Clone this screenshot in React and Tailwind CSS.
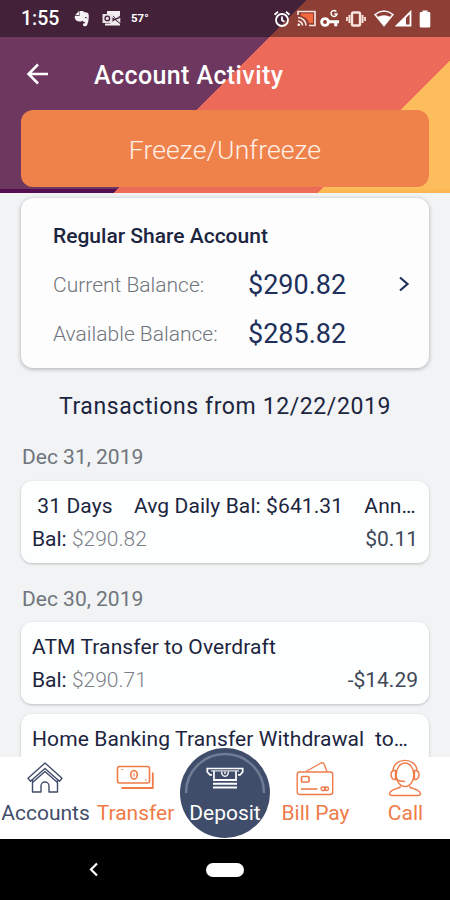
import React from 'react';

const AlarmIcon = () => (
  <svg width="18" height="18" viewBox="0 0 18 18" fill="none" stroke="#fff" strokeWidth="1.8">
    <circle cx="9" cy="10" r="6" />
    <path d="M9 6.5V10.2L11.5 11.8M1.5 4.8L5 1.8M16.5 4.8L13 1.8" />
  </svg>
);

const CastIcon = () => (
  <svg width="19" height="17" viewBox="0 0 19 17" fill="none" stroke="#fbe3de" strokeWidth="1.7">
    <path d="M4 3.5H16V13H12C11 9 8 6.5 4 6Z" fill="#f26a3d" stroke="none" />
    <path d="M1 5V1.5H18V15.5H12" />
    <path d="M1 7.5A8 8 0 0 1 9 15.5M1 11A4.5 4.5 0 0 1 5.5 15.5" />
    <circle cx="1.8" cy="14.8" r="1.3" fill="#fff" stroke="none" />
  </svg>
);

const KeyIcon = () => (
  <svg width="20" height="19" viewBox="0 0 20 19" fill="none" stroke="#fff">
    <circle cx="5" cy="13" r="3.4" strokeWidth="2.8" />
    <path d="M9 12.7H19M15.8 12.5V17.2" strokeWidth="3" />
    <path d="M16.3 2.4A3 3 0 1 0 17 5H14.3" strokeWidth="1.5" />
  </svg>
);

const VibrateIcon = () => (
  <svg width="20" height="16" viewBox="0 0 20 16" fill="none" stroke="#fbe3de">
    <rect x="6" y="1.5" width="8" height="13" rx="1.3" strokeWidth="2.4" />
    <path d="M3.5 4V12M16.5 4V12" strokeWidth="2" />
    <path d="M1 6V10M19 6V10" strokeWidth="1.8" />
  </svg>
);

const WifiIcon = () => (
  <svg width="20" height="17" viewBox="0 0 20 17">
    <path d="M1 4.5Q10 -2.5 19 4.5L10 15.5Z" fill="none" stroke="#fff" strokeWidth="1.5" />
    <path d="M3.5 7Q10 3.500 16.5 7L10 15.5Z" fill="#fff" />
  </svg>
);

const SignalIcon = () => (
  <svg width="17" height="17" viewBox="0 0 17 17">
    <path d="M2 15.5L15.5 2V15.5Z" fill="none" stroke="#fff" strokeWidth="1.8" />
    <path d="M2 15.5L11 6.5V15.5Z" fill="#fff" />
  </svg>
);

const BatteryIcon = () => (
  <svg width="12" height="18" viewBox="0 0 12 18">
    <path d="M3.5 0.5H8.5V2H10A1.3 1.3 0 0 1 11.3 3.3V16.2A1.3 1.3 0 0 1 10 17.5H2A1.3 1.3 0 0 1 0.7 16.2V3.3A1.3 1.3 0 0 1 2 2H3.5Z" fill="#fff" />
  </svg>
);

const ElephantIcon = () => (
  <svg width="16" height="17" viewBox="0 0 16 17">
    <path d="M5 1L1 5.2H5Z" fill="#eee" />
    <path d="M5.5 1H9L10 2L13.5 2.7Q14.7 3 14.8 6Q14.9 12 13 15.5Q12 16.6 9.7 16Q8.5 15.5 9 13.4L11 13.3V12.2Q8.5 11.6 8.2 10.4Q7.5 12 5 11.5Q1.5 11 0.8 8Q0.5 6.5 1 6H5.5Z" fill="#f4f0f3" />
    <path d="M11 7.5Q12.5 7 13 8.3" stroke="#43213c" fill="none" />
  </svg>
);

const OutlookIcon = () => (
  <svg width="19" height="17" viewBox="0 0 19 17">
    <path d="M5 1H18V7L13 9L5 4Z" fill="#f1edf0" />
    <rect x="0.5" y="4" width="10" height="9" fill="#e6dfe4" />
    <circle cx="5.3" cy="8.4" r="2.3" fill="none" stroke="#43213c" strokeWidth="1.3" />
    <path d="M3 15.5V13.5H8L13 10L18 14V15.5Z M18.3 8V13L14 9.7Z" fill="#f1edf0" />
    <path d="M11 6L14 9L18 6" fill="none" stroke="#43213c" strokeWidth="0.9" />
  </svg>
);

const HouseIcon = () => (
  <svg width="38" height="34" viewBox="0 0 38 34" fill="none" stroke="#424c6b" strokeWidth="1.4" strokeLinejoin="round">
    <path d="M19 2L36 17.2L33.5 20.2L19 7.4L4.5 20.2L2 17.2Z" />
    <path d="M6.5 18.6V31H15V25A4 4 0 0 1 23 25V31H31.5V18.6" />
    <path d="M6.5 21.5L19 10.5L31.5 21.5" />
  </svg>
);

const CashIcon = () => (
  <svg width="39" height="26" viewBox="0 0 39 26" fill="none" stroke="#f07b46" strokeWidth="1.6" strokeLinejoin="round">
    <rect x="1.5" y="1.5" width="32" height="16.5" rx="2" />
    <ellipse cx="18" cy="9.8" rx="3.3" ry="4.2" />
    <path d="M18 8V11.5M5.5 4.5H7M29 15H30.5" strokeWidth="1" />
    <path d="M36.8 7.5V23H5.5" strokeWidth="1.8" />
  </svg>
);

const DepositIcon = () => (
  <svg width="38" height="23" viewBox="0 0 38 23" fill="none" stroke="#fff">
    <path d="M6 7.8H4L1.3 5V1.5H36.7V5L34 7.8H32" strokeWidth="1.7" />
    <path d="M5 3.9H33" strokeWidth="1" />
    <path d="M8 4V12M30 4V12" strokeWidth="1.7" />
    <path d="M7 13H31M7 16.8H31M7 20.6H31" strokeWidth="2" />
    <path d="M15.5 4.5Q16 9.3 19 9.3Q22 9.3 22.5 4.5M19 4.5V7" strokeWidth="1.4" />
  </svg>
);

const CardIcon = () => (
  <svg width="38" height="35" viewBox="0 0 38 35" fill="none" stroke="#ee7c4b" strokeWidth="1.4" strokeLinejoin="round">
    <rect x="1.2" y="11" width="35.5" height="22.5" rx="2.5" />
    <path d="M10 10.5L25 2Q27 1.2 28 3L31 10.5" />
    <rect x="5.5" y="15.5" width="7.5" height="5.5" rx="1" strokeWidth="1.7" />
    <path d="M5 28H21.5" strokeWidth="1.6" />
    <rect x="25" y="26" width="4.5" height="3.5" rx="1.7" />
    <rect x="28.5" y="26" width="4" height="3.5" rx="1.7" />
  </svg>
);

const AgentIcon = () => (
  <svg width="34" height="38" viewBox="0 0 34 38" fill="none" stroke="#ee7c4b" strokeWidth="1.4" strokeLinejoin="round">
    <path d="M5 11.5C6 -2 28 -2 29 11.5" />
    <ellipse cx="17" cy="15.8" rx="8.8" ry="11.8" />
    <path d="M7.5 11.5H5.5Q3 12.5 3 15.5Q3 19 5.5 20.5H7.5ZM26.5 11.5H28.5Q31 12.5 31 15.5Q31 19 28.5 20.5H26.5Z" />
    <path d="M8 19.5Q10 22.5 17 22.5" />
    <path d="M12 27V28.5Q2 31 1.5 34.5Q1.5 36.5 4 36.5H30Q32.5 36.5 32.5 34.5Q32 31 22 28.5V27" />
  </svg>
);

const Transaction = ({ title, balance, amount }) => (
  <div className="h-[82px] rounded-[11px] bg-[#fdfefe] pl-[11px] pr-[11px] pt-[11px] shadow-[0_1px_3px_rgba(0,0,0,0.22)]">
    <div className="whitespace-pre text-[21px] font-[450] leading-[28px] tracking-[0.1px] text-[#1c253f]">{title}</div>
    <div className="mt-[5px] flex justify-between text-[21px] leading-[28px]">
      <div className="font-[450] text-[#1c253f]">
        Bal: <span className="font-light text-[#7b8088]">{balance}</span>
      </div>
      <div className="text-[#3f4858]">{amount}</div>
    </div>
  </div>
);

const NavItem = ({ icon, label, color }) => (
  <div className={`flex w-[90px] flex-col items-center ${color}`}>
    <div className="flex h-[42px] items-center justify-center">{icon}</div>
    <div className="whitespace-nowrap pl-[1px] text-[21px] leading-[28px]">{label}</div>
  </div>
);

const App = () => {
  return (
    <div className="flex h-[900px] w-[450px] flex-col overflow-hidden bg-[#f1f3f5] font-['Roboto',sans-serif]">
      {/* Header */}
      <div className="flex h-[193px] shrink-0 flex-col bg-[linear-gradient(135deg,#6e375f_0_217px,#eb6a59_217px_361px,#fdbd5c_361px)]">
        <div className="flex h-[37px] items-center bg-black/40 text-white">
          <span className="ml-[21px] w-[40px] text-[19.5px] font-medium leading-none">1:55</span>
          <div className="ml-[13px]"><ElephantIcon /></div>
          <div className="ml-[12px]"><OutlookIcon /></div>
          <span className="ml-[10px] text-[11.5px] font-bold leading-none">57°</span>
          <div className="ml-auto mr-[19px] flex items-center">
            <AlarmIcon />
            <div className="ml-[6px]"><CastIcon /></div>
            <div className="ml-[4px]"><KeyIcon /></div>
            <div className="ml-[6px]"><VibrateIcon /></div>
            <div className="ml-[8px]"><WifiIcon /></div>
            <div className="ml-[1px]"><SignalIcon /></div>
            <div className="ml-[7px]"><BatteryIcon /></div>
          </div>
        </div>
        <div className="flex h-[72px] items-center">
          <svg className="ml-[26px] mt-[1px]" width="23" height="22" viewBox="0 0 23 22" fill="none" stroke="#fff" strokeWidth="2.5">
            <path d="M22 11H2.5M12 1.5L2.5 11L12 20.5" />
          </svg>
          <h1 className="ml-[45px] mt-[5px] text-[25px] font-medium leading-[30px] tracking-[0.4px] text-white">Account Activity</h1>
        </div>
        <button className="mx-[21px] mt-[1px] block h-[77px] w-[408px] rounded-[12px] bg-[#ef824b] pt-[2px] text-[26.5px] font-light tracking-[0.1px] text-[#fff0e6]">
          Freeze/Unfreeze
        </button>
        <div className="mt-auto h-[4px] bg-[linear-gradient(135deg,#550f50_0_83px,#ee6b56_83px_227px,#fdb951_227px)]" />
      </div>

      {/* Account summary and transactions */}
      <div className="h-[564px] shrink-0 overflow-hidden px-[21px] pt-[5px]">
        <div className="h-[170px] rounded-[12px] bg-[#fdfdfe] pl-[32px] pr-[19px] pt-[24px] shadow-[0_1px_4px_rgba(0,0,0,0.3)]">
          <h2 className="text-[21px] font-medium leading-[28px] text-[#1c253f]">Regular Share Account</h2>
          <div className="mt-[18px] flex h-[34px] items-center">
            <span className="w-[195px] pt-[2px] text-[21px] font-light text-[#70757c]">Current Balance:</span>
            <span className="pt-[1px] text-[27px] font-[450] text-[#20305a]">$290.82</span>
            <svg className="-mt-[3px] ml-auto" width="12" height="18" viewBox="0 0 12 18" fill="none" stroke="#20305a" strokeWidth="2.2">
              <path d="M2 2.5L9.5 9L2 15.5" />
            </svg>
          </div>
          <div className="mt-[15px] flex h-[34px] items-center">
            <span className="w-[195px] pt-[2px] text-[21px] font-light text-[#70757c]">Available Balance:</span>
            <span className="pt-[1px] text-[27px] font-[450] text-[#20305a]">$285.82</span>
          </div>
        </div>

        <h2 className="mt-[23px] whitespace-nowrap text-center text-[23px] font-[450] leading-[32px] tracking-[0.6px] text-[#1c253f]">Transactions from 12/22/2019</h2>

        <div className="mb-[10px] ml-[1px] mt-[20px] text-[21px] leading-[28px] text-[#70757c]">Dec 31, 2019</div>
        <Transaction title=" 31 Days    Avg Daily Bal: $641.31    Ann…" balance="$290.82" amount="$0.11" />

        <div className="mb-[9px] ml-[1px] mt-[22px] text-[21px] leading-[28px] text-[#70757c]">Dec 30, 2019</div>
        <Transaction title="ATM Transfer to Overdraft" balance="$290.71" amount="-$14.29" />

        {/* Last row, cut by the bottom navigation */}
        <div className="mt-[10px] h-[60px] rounded-t-[11px] bg-[#fdfefe] pl-[11px] pt-[11px] shadow-[0_1px_3px_rgba(0,0,0,0.22)]">
          <div className="whitespace-pre text-[21px] font-[450] leading-[28px] tracking-[0.1px] text-[#1c253f]">Home Banking Transfer Withdrawal  to…</div>
        </div>
      </div>

      {/* Bottom navigation */}
      <div className="flex h-[82px] shrink-0 bg-white">
        <NavItem icon={<HouseIcon />} label="Accounts" color="text-[#424c6b]" />
        <NavItem icon={<CashIcon />} label="Transfer" color="text-[#f07b46]" />
        <div className="relative -mt-[9px] flex h-[90px] w-[90px] flex-col items-center rounded-full bg-[#404d6a] text-white">
          <svg className="absolute left-0 top-0" width="90" height="90" viewBox="0 0 90 90" fill="none">
            <path d="M6 45A39 39 0 0 1 84 45" stroke="#707c95" strokeWidth="2.5" />
          </svg>
          <div className="mt-[19px]"><DepositIcon /></div>
          <div className="mt-[9px] text-[21px] leading-[28px]">Deposit</div>
        </div>
        <NavItem icon={<CardIcon />} label="Bill Pay" color="text-[#ee7c4b]" />
        <NavItem icon={<AgentIcon />} label="Call" color="text-[#ee7c4b]" />
      </div>

      {/* Android navigation bar */}
      <div className="relative flex h-[61px] shrink-0 items-center justify-center bg-black">
        <svg className="absolute left-[88px] top-[23px]" width="11" height="15" viewBox="0 0 11 15" fill="none" stroke="#fff" strokeWidth="2.2">
          <path d="M9 1.5L3 7.5L9 13.5" />
        </svg>
        <div className="h-[14px] w-[38px] rounded-full bg-white" />
      </div>
    </div>
  );
};

export default App;
